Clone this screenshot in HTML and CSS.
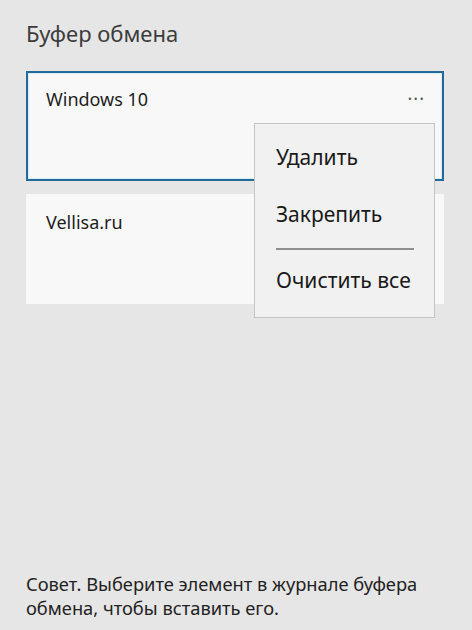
FILE: index.html
```html
<!DOCTYPE html>
<html lang="ru">
  <head>
    <meta charset="UTF-8" />
    <meta name="viewport" content="width=device-width, initial-scale=1.0" />
    <title>Буфер обмена</title>
    <link rel="stylesheet" href="styles.css">
  </head>
  <body>
    <div class="panel">
      <h1 class="panel-title">Буфер обмена</h1>

      <div class="clip-list">
        <div class="clip-item selected">
          <span class="clip-text">Windows 10</span>
          <span class="more-button">&middot;&middot;&middot;</span>
        </div>
        <div class="clip-item">
          <span class="clip-text">Vellisa.ru</span>
        </div>

        <ul class="context-menu">
          <li class="menu-item">Удалить</li>
          <li class="menu-item">Закрепить</li>
          <li class="menu-separator"></li>
          <li class="menu-item">Очистить все</li>
        </ul>
      </div>

      <p class="tip">Совет. Выберите элемент в журнале буфера обмена, чтобы вставить его.</p>
    </div>
  </body>
</html>
```

FILE: styles.css
```css
* {
  box-sizing: border-box;
  margin: 0;
  padding: 0;
}

body {
  background-color: #e6e6e6;
  font-family: "Noto Sans", "Open Sans", sans-serif;
  color: #1e1e1e;
}

.panel {
  display: flex;
  flex-direction: column;
  height: 100vh;
  padding: 0 28px 0 26px;
}

.panel-title {
  margin-top: 18px;
  font-size: 22px;
  font-weight: 400;
  line-height: 30px;
  color: #3c3c3c;
}

.clip-list {
  position: relative;
  display: flex;
  flex-direction: column;
  gap: 13px;
  margin-top: 23px;
}

.clip-item {
  display: flex;
  justify-content: space-between;
  align-items: flex-start;
  height: 110px;
  padding: 13px 17px 0 18px;
  background-color: #f8f8f8;
  border: 2px solid transparent;
}

.clip-item.selected {
  border-color: #24699a;
  box-shadow: inset 0 0 0 1px #d4eef8;
}

.clip-text {
  font-size: 18px;
  line-height: 26px;
}

.more-button {
  font-size: 18px;
  line-height: 20px;
  letter-spacing: 1px;
  color: #555;
  padding-top: 2px;
}

.context-menu {
  position: absolute;
  left: 228px;
  top: 52px;
  width: 181px;
  padding: 5px 0 8px 0;
  list-style: none;
  background-color: #f1f1f1;
  border: 1px solid #c4c4c4;
}

.menu-item {
  height: 57px;
  padding-left: 21px;
  font-size: 21px;
  line-height: 57px;
  color: #1a1a1a;
}

.menu-separator {
  height: 2px;
  margin: 5px 20px 2px 21px;
  background-color: #8f8f8f;
}

.tip {
  margin-top: auto;
  margin-bottom: 10px;
  font-size: 18.3px;
  line-height: 24px;
  color: #222;
}
```
